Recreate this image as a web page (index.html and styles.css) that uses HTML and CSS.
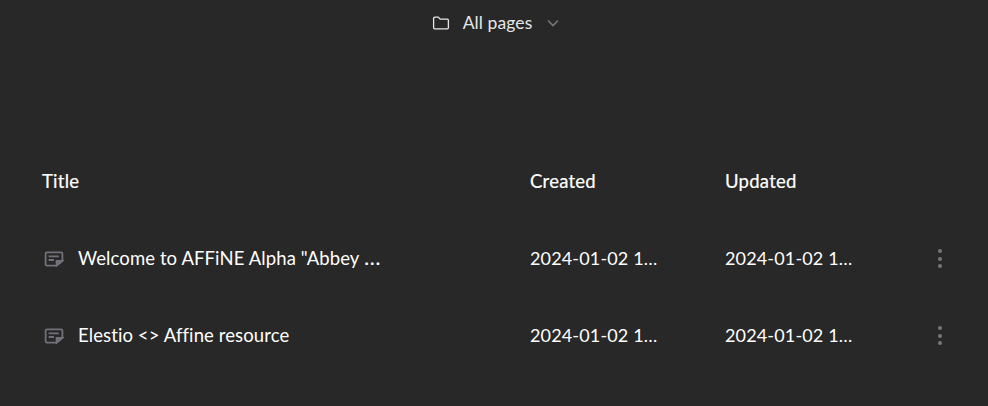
FILE: index.html
```html
<!DOCTYPE html>
<html lang="en">
<head>
  <meta charset="UTF-8">
  <title>All pages</title>
  <link rel="stylesheet" href="styles.css">
</head>
<body>
  <div class="topbar">
    <div class="view-switch">
      <svg class="folder-icon" width="18" height="16" viewBox="0 0 18 16" fill="none" stroke="#e6e6e6" stroke-width="1.3">
        <path d="M1.6 3.2c0-.6.5-1.1 1.1-1.1h3.6l1.9 2h7.1c.6 0 1.1.5 1.1 1.1v7.6c0 .6-.5 1.1-1.1 1.1H2.7c-.6 0-1.1-.5-1.1-1.1z"/>
      </svg>
      <span class="view-name">All pages</span>
      <svg class="chevron" width="12" height="8" viewBox="0 0 12 8" fill="none" stroke="#77757d" stroke-width="1.6">
        <path d="M1 1.5l5 5 5-5"/>
      </svg>
    </div>
  </div>

  <div class="page-list">
    <div class="list-row list-head">
      <div class="col-title">Title</div>
      <div class="col-date">Created</div>
      <div class="col-date">Updated</div>
      <div class="col-more"></div>
    </div>

    <div class="list-row page-row">
      <div class="col-title">
        <svg class="page-icon" width="20" height="16" viewBox="0 0 20 16" fill="none" stroke="#72707a" stroke-width="1.8">
          <path d="M12.5 14.6H2.9c-.8 0-1.3-.5-1.3-1.3V2.7c0-.8.5-1.3 1.3-1.3h14.2c.8 0 1.3.5 1.3 1.3v7.2z"/>
          <path d="M4.6 5.4h10.2M4.6 9h5.4"/>
          <path d="M12.6 14.6V9.9h5.8z" fill="#72707a"/>
        </svg>
        <span class="row-text">Welcome to AFFiNE Alpha "Abbey <span class="ellipsis">…</span></span>
      </div>
      <div class="col-date row-text date-text">2024-01-02 1…</div>
      <div class="col-date row-text date-text">2024-01-02 1…</div>
      <div class="col-more"><span class="dots"><i></i><i></i><i></i></span></div>
    </div>

    <div class="list-row page-row">
      <div class="col-title">
        <svg class="page-icon" width="20" height="16" viewBox="0 0 20 16" fill="none" stroke="#72707a" stroke-width="1.8">
          <path d="M12.5 14.6H2.9c-.8 0-1.3-.5-1.3-1.3V2.7c0-.8.5-1.3 1.3-1.3h14.2c.8 0 1.3.5 1.3 1.3v7.2z"/>
          <path d="M4.6 5.4h10.2M4.6 9h5.4"/>
          <path d="M12.6 14.6V9.9h5.8z" fill="#72707a"/>
        </svg>
        <span class="row-text">Elestio &lt;&gt; Affine resource</span>
      </div>
      <div class="col-date row-text date-text">2024-01-02 1…</div>
      <div class="col-date row-text date-text">2024-01-02 1…</div>
      <div class="col-more"><span class="dots"><i></i><i></i><i></i></span></div>
    </div>
  </div>
</body>
</html>
```

FILE: styles.css
```css
body {
  margin: 0;
  background-color: #282828;
  color: #fff;
  font-family: Lato, "Open Sans", sans-serif;
  font-size: 18.5px;
  letter-spacing: 0.1px;
  overflow: hidden;
}

.topbar {
  display: flex;
  justify-content: center;
  height: 45px;
  align-items: center;
  padding-left: 3px;
}

.view-switch {
  display: flex;
  align-items: center;
  font-size: 17.5px;
  color: #e6e6e6;
}

.view-name {
  margin: 0 15px 0 13px;
}

.page-list {
  padding: 97px 0 0 42px;
}

.list-row {
  display: flex;
  align-items: center;
}

.list-head {
  height: 78px;
  letter-spacing: 0.25px;
  -webkit-text-stroke: 0.2px #fff;
}

.page-row {
  height: 77px;
}

.row-text {
  margin-top: -2px;
}

.col-title {
  width: 488px;
  display: flex;
  align-items: center;
}

.col-date {
  width: 195px;
}

.date-text {
  font-size: 18px;
  letter-spacing: 0.15px;
}

.page-icon {
  margin: 0 14px 0 2px;
  flex-shrink: 0;
}

.ellipsis {
  font-size: 22px;
  line-height: 1;
}

.col-more {
  width: 40px;
  display: flex;
  justify-content: center;
}

.dots {
  display: flex;
  flex-direction: column;
  gap: 3.4px;
}

.dots i {
  width: 4px;
  height: 4px;
  border-radius: 50%;
  background-color: #77757d;
}
```
